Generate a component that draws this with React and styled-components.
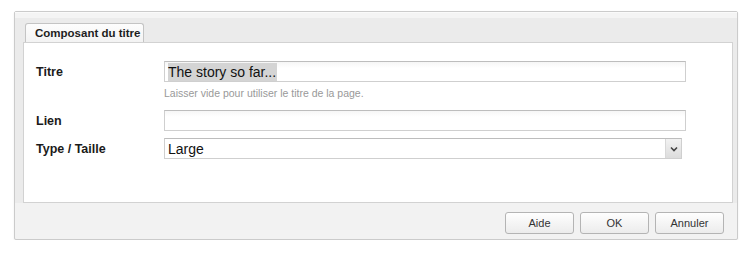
import styled, { createGlobalStyle } from "styled-components";

const GlobalStyle = createGlobalStyle`
  html, body {
    margin: 0;
    padding: 0;
    background: #ffffff;
  }
  body {
    font-family: "Liberation Sans", Arial, sans-serif;
  }
`;

const Page = styled.div`
  padding: 11px 0 0 14px;
`;

const Dialog = styled.div`
  width: 722px;
  height: 227px;
  border: 1px solid #cbcbcb;
  border-radius: 2px;
  background: #f2f2f2;
  box-shadow: 0 1px 2px rgba(0, 0, 0, 0.08);
  display: flex;
  flex-direction: column;
`;

const Body = styled.div`
  padding: 0 4px 0 8px;
  background: linear-gradient(#f4f4f4 0, #f4f4f4 5px, #ebebeb 5px, #ebebeb 30px);
  border-top: 1px solid #fafafa;
`;

const TabStrip = styled.div`
  display: flex;
  padding: 10px 0 0 2px;
`;

const Tab = styled.div`
  width: 108px;
  height: 18px;
  padding-left: 9px;
  border: 1px solid #c4c4c4;
  border-bottom: none;
  border-radius: 3px 3px 0 0;
  background: linear-gradient(#fdfdfd, #f3f3f3);
  font-size: 11.5px;
  font-weight: bold;
  color: #1e1e1e;
  line-height: 19px;
`;

const Panel = styled.div`
  height: 161px;
  box-sizing: border-box;
  border: 1px solid #d2d2d2;
  background: #ffffff;
  padding: 18px 0 0 12px;
`;

const Row = styled.div`
  display: flex;
  align-items: center;
  margin-top: ${(p) => p.$gap || 0}px;
`;

const Label = styled.div`
  width: 128px;
  font-size: 12.5px;
  font-weight: bold;
  color: #1a1a1a;
`;

const Input = styled.div`
  width: ${(p) => p.$width}px;
  height: 21px;
  box-sizing: border-box;
  border: 1px solid #cfcfcf;
  border-top-color: #bdbdbd;
  background: linear-gradient(#f6f6f6, #ffffff 6px);
  font-size: 14px;
  color: #111;
  padding: 0 0 0 3px;
  display: flex;
  align-items: center;
`;

const Selected = styled.span`
  background: #d4d4d4;
  padding: 1px 1px 1px 0;
`;

const Hint = styled.div`
  margin: 4px 0 0 128px;
  line-height: 14px;
  font-size: 10.5px;
  color: #999999;
`;

const Select = styled(Input)`
  padding-right: 0;
  justify-content: space-between;
  background: #ffffff;
`;

const Arrow = styled.div`
  width: 15px;
  height: 19px;
  background: linear-gradient(#f2f2f2, #dcdcdc);
  border-left: 1px solid #d8d8d8;
  display: flex;
  align-items: center;
  justify-content: center;
`;

const Footer = styled.div`
  flex: 1;
  display: flex;
  justify-content: flex-end;
  align-items: center;
  gap: 6px;
  padding: 3px 13px 0 0;
`;

const Button = styled.div`
  width: 67px;
  height: 20px;
  border: 1px solid #b4b4b4;
  border-radius: 3px;
  background: linear-gradient(#fefefe, #ececec);
  font-size: 11px;
  color: #333;
  text-align: center;
  line-height: 20px;
`;

export default function App() {
  return (
    <Page>
      <GlobalStyle />
      <Dialog>
        <Body>
          <TabStrip>
            <Tab>Composant du titre</Tab>
          </TabStrip>
          <Panel>
            <Row>
              <Label>Titre</Label>
              <Input $width={522}>
                <Selected>The story so far...</Selected>
              </Input>
            </Row>
            <Hint>Laisser vide pour utiliser le titre de la page.</Hint>
            <Row $gap={10}>
              <Label>Lien</Label>
              <Input $width={522} />
            </Row>
            <Row $gap={7}>
              <Label>Type / Taille</Label>
              <Select $width={518}>
                <span>Large</span>
                <Arrow>
                  <svg width="8" height="6" viewBox="0 0 8 6">
                    <path d="M1 1.5 L4 4.5 L7 1.5" fill="none" stroke="#444" strokeWidth="1.6" />
                  </svg>
                </Arrow>
              </Select>
            </Row>
          </Panel>
        </Body>
        <Footer>
          <Button>Aide</Button>
          <Button>OK</Button>
          <Button>Annuler</Button>
        </Footer>
      </Dialog>
    </Page>
  );
}
